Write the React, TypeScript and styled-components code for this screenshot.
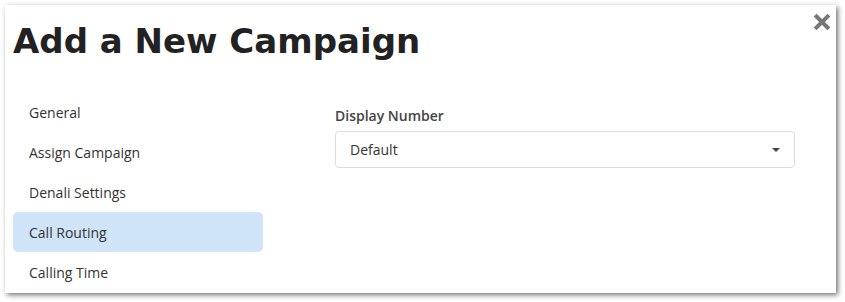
import styled, { createGlobalStyle } from "styled-components";

const GlobalStyle = createGlobalStyle`
    body {
        margin: 0;
        background: #ffffff;
        font-family: "Open Sans", "Noto Sans", sans-serif;
    }
`;

const Page = styled.div`
    padding: 5px 0 0 5px;
    width: 845px;
    height: 302px;
    box-sizing: border-box;
`;

const Modal = styled.div`
    position: relative;
    width: 831px;
    height: 288px;
    background: #ffffff;
    box-shadow: 2px 2px 5px rgba(0, 0, 0, 0.55);
    box-sizing: border-box;
    padding: 0 8px;
`;

const Title = styled.h1`
    margin: 0;
    padding-top: 12px;
    font-family: "DejaVu Sans", sans-serif;
    font-weight: 700;
    font-size: 34px;
    line-height: 48px;
    color: #222222;
    letter-spacing: 0;
`;

const Close = styled.button`
    position: absolute;
    top: 8px;
    right: 5px;
    width: 18px;
    height: 18px;
    padding: 0;
    border: none;
    background: none;
    cursor: pointer;

    svg {
        display: block;
    }
`;

const Body = styled.div`
    display: flex;
    gap: 72px;
    margin-top: 27px;
`;

const Nav = styled.nav`
    display: flex;
    flex-direction: column;
    width: 250px;
`;

const NavItem = styled.div<{ $active?: boolean }>`
    height: 40px;
    display: flex;
    align-items: center;
    padding-left: 16px;
    border-radius: 5px;
    font-size: 14px;
    color: #333333;
    background: ${(p) => (p.$active ? "#cfe4f8" : "transparent")};
`;

const Content = styled.div`
    padding-top: 14px;
    width: 460px;
`;

const Label = styled.div`
    font-size: 14px;
    font-weight: 600;
    color: #444444;
    line-height: 20px;
    margin-bottom: 5px;
`;

const Select = styled.div`
    height: 37px;
    border: 1px solid #dcdcdc;
    border-radius: 4px;
    box-sizing: border-box;
    display: flex;
    align-items: center;
    justify-content: space-between;
    padding: 0 14px;
    font-size: 14px;
    color: #333333;
`;

const Caret = styled.span`
    width: 0;
    height: 0;
    border-left: 4px solid transparent;
    border-right: 4px solid transparent;
    border-top: 4px solid #444444;
    margin-top: 1px;
`;

const navItems = ["General", "Assign Campaign", "Denali Settings", "Call Routing", "Calling Time"];

export default function App() {
    return (
        <>
            <GlobalStyle />
            <Page>
                <Modal>
                    <Title>Add a New Campaign</Title>
                    <Close aria-label="Close">
                        <svg width="18" height="18" viewBox="0 0 18 18">
                            <path d="M3.5 3.5 L14.5 14.5 M14.5 3.5 L3.5 14.5" stroke="#777777" strokeWidth="4" strokeLinecap="square" />
                        </svg>
                    </Close>
                    <Body>
                        <Nav>
                            {navItems.map((item) => (
                                <NavItem key={item} $active={item === "Call Routing"}>
                                    {item}
                                </NavItem>
                            ))}
                        </Nav>
                        <Content>
                            <Label>Display Number</Label>
                            <Select>
                                <span>Default</span>
                                <Caret />
                            </Select>
                        </Content>
                    </Body>
                </Modal>
            </Page>
        </>
    );
}
